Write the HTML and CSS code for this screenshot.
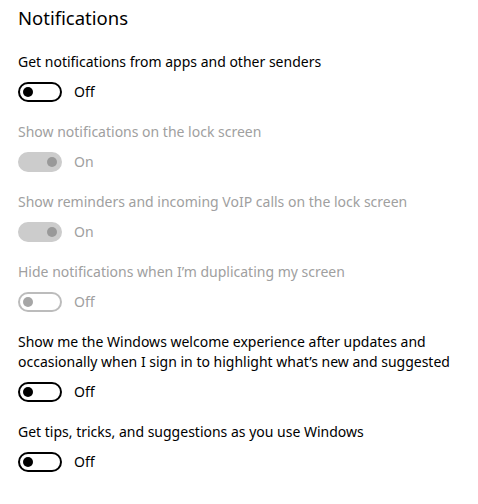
FILE: index.html
```html
<!DOCTYPE html>
<html>
<head>
<meta charset="utf-8">
<link rel="stylesheet" href="styles.css">
</head>
<body>
<div class="page">
  <h1 class="title">Notifications</h1>
  <div class="setting">
    <div class="label">Get notifications from apps and other senders</div>
    <div class="toggle-row"><span class="toggle off"><span class="knob"></span></span><span class="state">Off</span></div>
  </div>
  <div class="setting disabled">
    <div class="label">Show notifications on the lock screen</div>
    <div class="toggle-row"><span class="toggle on"><span class="knob"></span></span><span class="state">On</span></div>
  </div>
  <div class="setting disabled">
    <div class="label">Show reminders and incoming VoIP calls on the lock screen</div>
    <div class="toggle-row"><span class="toggle on"><span class="knob"></span></span><span class="state">On</span></div>
  </div>
  <div class="setting disabled">
    <div class="label">Hide notifications when I’m duplicating my screen</div>
    <div class="toggle-row"><span class="toggle off"><span class="knob"></span></span><span class="state">Off</span></div>
  </div>
  <div class="setting">
    <div class="label">Show me the Windows welcome experience after updates and occasionally when I sign in to highlight what’s new and suggested</div>
    <div class="toggle-row"><span class="toggle off"><span class="knob"></span></span><span class="state">Off</span></div>
  </div>
  <div class="setting">
    <div class="label">Get tips, tricks, and suggestions as you use Windows</div>
    <div class="toggle-row"><span class="toggle off"><span class="knob"></span></span><span class="state">Off</span></div>
  </div>
</div>
</body>
</html>
```

FILE: styles.css
```css
html, body {
  margin: 0;
  padding: 0;
  background: #ffffff;
}
.page {
  padding: 4px 18px 0 18px;
  font-family: "Noto Sans", "Open Sans", sans-serif;
  color: #000;
  width: 442px;
}
.title {
  margin: 0 0 20px 0;
  font-size: 18.5px;
  font-weight: 400;
  line-height: 28px;
}
.setting {
  display: flex;
  flex-direction: column;
  gap: 10px;
  margin-bottom: 20px;
}
.label {
  font-size: 14px;
  line-height: 20px;
}
.toggle-row {
  display: flex;
  align-items: center;
  gap: 12px;
  height: 20px;
}
.toggle {
  box-sizing: border-box;
  width: 44px;
  height: 20px;
  border-radius: 10px;
  border: 2px solid #000;
  display: flex;
  align-items: center;
  padding: 0 3px;
}
.knob {
  width: 10px;
  height: 10px;
  border-radius: 50%;
  background: #000;
}
.toggle.on {
  justify-content: flex-end;
}
.state {
  font-size: 14px;
  line-height: 20px;
}
.disabled .label,
.disabled .state {
  color: #a0a0a0;
}
.disabled .toggle.on {
  background: #cccccc;
  border-color: #cccccc;
}
.disabled .toggle.on .knob {
  background: #999999;
}
.disabled .toggle.off {
  border-color: #bcbcbc;
}
.disabled .toggle.off .knob {
  background: #a6a6a6;
}
```
